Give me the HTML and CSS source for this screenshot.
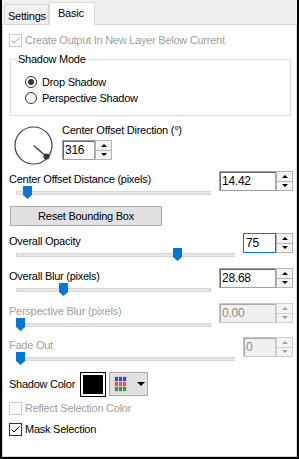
FILE: index.html
```html
<!DOCTYPE html>
<html>

<head>
    <meta charset="UTF-8">
    <title>Drop Shadow - Basic</title>
    <link rel="stylesheet" href="styles.css">
</head>

<body>
    <div class="window">
        <div class="tabs">
            <div class="tab">Settings</div>
            <div class="tab tab_active">Basic</div>
        </div>
        <div class="panel">
            <div class="check check_first check_disabled">
                <span class="check_box">
                    <svg width="11" height="11" viewBox="0 0 11 11"><path d="M1.5 5.5L4 8L9.5 2.5" fill="none" stroke="currentColor" stroke-width="1"/></svg>
                </span>
                Create Output In New Layer Below Current
            </div>

            <div class="group">
                <div class="group_title">Shadow Mode</div>
                <div class="radio radio_first"><span class="radio_dot radio_dot_on"></span>Drop Shadow</div>
                <div class="radio"><span class="radio_dot"></span>Perspective Shadow</div>
            </div>

            <div class="dial_row">
                <svg class="dial" width="40" height="40" viewBox="0 0 40 40">
                    <circle cx="19.5" cy="19.5" r="18.5" fill="none" stroke="#3c3c3c" stroke-width="1.2"/>
                    <line x1="19.5" y1="19.5" x2="32.5" y2="30.5" stroke="#3c3c3c" stroke-width="1.4"/>
                    <circle cx="32.5" cy="30.5" r="3" fill="#333"/>
                </svg>
                <div class="dial_info">
                    <div class="label">Center Offset Direction (°)</div>
                    <div class="spin spin_short spin_dial">
                        <div class="spin_field">316</div>
                        <div class="spin_btns"><span class="spin_btn spin_up"></span><span class="spin_btn spin_down"></span></div>
                    </div>
                </div>
            </div>

            <div class="sgroup sgroup_first">
                <div class="sgroup_main">
                    <div class="label">Center Offset Distance (pixels)</div>
                    <div class="slider"><div class="track"></div><div class="thumb" style="left: 7px"><svg width="9" height="13" viewBox="0 0 9 13"><path d="M0 0H9V9L4.5 13L0 9Z" fill="#0078d7"/></svg></div></div>
                </div>
                <div class="spin spin_wide">
                    <div class="spin_field">14.42</div>
                    <div class="spin_btns"><span class="spin_btn spin_up"></span><span class="spin_btn spin_down"></span></div>
                </div>
            </div>

            <div class="button">Reset Bounding Box</div>

            <div class="sgroup">
                <div class="sgroup_main">
                    <div class="label">Overall Opacity</div>
                    <div class="slider"><div class="track"></div><div class="thumb" style="left: 157px"><svg width="9" height="13" viewBox="0 0 9 13"><path d="M0 0H9V9L4.5 13L0 9Z" fill="#0078d7"/></svg></div></div>
                </div>
                <div class="spin spin_short spin_focus">
                    <div class="spin_field">75</div>
                    <div class="spin_btns"><span class="spin_btn spin_up"></span><span class="spin_btn spin_down"></span></div>
                </div>
            </div>

            <div class="sgroup">
                <div class="sgroup_main">
                    <div class="label">Overall Blur (pixels)</div>
                    <div class="slider"><div class="track"></div><div class="thumb" style="left: 43px"><svg width="9" height="13" viewBox="0 0 9 13"><path d="M0 0H9V9L4.5 13L0 9Z" fill="#0078d7"/></svg></div></div>
                </div>
                <div class="spin spin_wide">
                    <div class="spin_field">28.68</div>
                    <div class="spin_btns"><span class="spin_btn spin_up"></span><span class="spin_btn spin_down"></span></div>
                </div>
            </div>

            <div class="sgroup sgroup_disabled">
                <div class="sgroup_main">
                    <div class="label">Perspective Blur (pixels)</div>
                    <div class="slider"><div class="track"></div><div class="thumb" style="left: 0px"><svg width="9" height="13" viewBox="0 0 9 13"><path d="M0 0H9V9L4.5 13L0 9Z" fill="#0078d7"/></svg></div></div>
                </div>
                <div class="spin spin_wide spin_disabled">
                    <div class="spin_field">0.00</div>
                    <div class="spin_btns"><span class="spin_btn spin_up"></span><span class="spin_btn spin_down"></span></div>
                </div>
            </div>

            <div class="sgroup sgroup_disabled sgroup_last">
                <div class="sgroup_main">
                    <div class="label">Fade Out</div>
                    <div class="slider"><div class="track"></div><div class="thumb" style="left: 0px"><svg width="9" height="13" viewBox="0 0 9 13"><path d="M0 0H9V9L4.5 13L0 9Z" fill="#0078d7"/></svg></div></div>
                </div>
                <div class="spin spin_short spin_disabled">
                    <div class="spin_field">0</div>
                    <div class="spin_btns"><span class="spin_btn spin_up"></span><span class="spin_btn spin_down"></span></div>
                </div>
            </div>

            <div class="color_row">
                <div class="color_label">Shadow Color</div>
                <div class="swatch"></div>
                <div class="palette">
                    <svg width="13" height="16" viewBox="0 0 13 16">
                        <rect width="13" height="16" fill="#cfcfcf"/>
                        <rect x="1" y="1" width="3" height="4" fill="#3c3cff"/>
                        <rect x="5" y="1" width="3" height="4" fill="#3c3cff"/>
                        <rect x="9" y="1" width="3" height="4" fill="#3c3cff"/>
                        <rect x="1" y="6" width="3" height="4" fill="#ff4848"/>
                        <rect x="5" y="6" width="3" height="4" fill="#ff4848"/>
                        <rect x="9" y="6" width="3" height="4" fill="#ff4848"/>
                        <rect x="1" y="11" width="3" height="4" fill="#2e9e3e"/>
                        <rect x="5" y="11" width="3" height="4" fill="#2e9e3e"/>
                        <rect x="9" y="11" width="3" height="4" fill="#2e9e3e"/>
                    </svg>
                    <span class="palette_arrow"></span>
                </div>
            </div>

            <div class="check check_reflect check_disabled">
                <span class="check_box"></span>
                Reflect Selection Color
            </div>
            <div class="check check_mask">
                <span class="check_box">
                    <svg width="11" height="11" viewBox="0 0 11 11"><path d="M1.5 5.5L4 8L9.5 2.5" fill="none" stroke="currentColor" stroke-width="1"/></svg>
                </span>
                Mask Selection
            </div>
        </div>
    </div>
</body>

</html>
```

FILE: styles.css
```css
html,
body {
    margin: 0;
    padding: 0;
    font-family: "Liberation Sans", Arial, sans-serif;
    font-size: 11px;
    letter-spacing: -0.25px;
    color: #000000;
}

.window {
    width: 299px;
    height: 459px;
    box-sizing: border-box;
    border: 2px solid #000000;
    border-top: 0;
    background: #f0f0f0;
    display: flex;
    flex-direction: column;
}

/* tab strip */
.tabs {
    height: 24px;
    display: flex;
    align-items: flex-end;
    padding-left: 2px;
}

.tab {
    width: 45px;
    height: 20px;
    box-sizing: border-box;
    border: 1px solid #d9d9d9;
    border-bottom: 0;
    padding: 4px 0 0 3px;
    line-height: 14px;
}

.tab_active {
    width: 46px;
    height: 23px;
    margin-bottom: -1px;
    padding: 3px 0 0 8px;
    background: #ffffff;
    position: relative;
    z-index: 1;
}

.panel {
    flex: 1;
    background: #ffffff;
    border: 1px solid #d9d9d9;
    padding: 0 3px 0 6px;
}

/* checkboxes */
.check {
    display: flex;
    align-items: center;
    height: 13px;
    line-height: 13px;
}

.check_first {
    margin-top: 9px;
}

.check_reflect {
    margin-top: 5px;
}

.check_mask {
    margin-top: 8px;
}

.check_box {
    width: 13px;
    height: 13px;
    box-sizing: border-box;
    border: 1px solid #333333;
    margin-right: 3px;
    flex-shrink: 0;
    display: flex;
}

.check_disabled {
    color: #a0a0a0;
}

.check_disabled .check_box {
    border-color: #cccccc;
}

/* group box */
.group {
    margin: 12px 2px 0 1px;
    border: 1px solid #dcdcdc;
    padding-bottom: 9px;
}

.group_title {
    width: max-content;
    margin: -8px 0 0 6px;
    padding: 0 1px;
    background: #ffffff;
    line-height: 14px;
}

.radio {
    display: flex;
    align-items: center;
    height: 16px;
    margin-left: 14px;
}

.radio_first {
    margin-top: 8px;
}

.radio_dot {
    width: 12px;
    height: 12px;
    box-sizing: border-box;
    border: 1px solid #333333;
    border-radius: 50%;
    margin-right: 5px;
    display: flex;
    align-items: center;
    justify-content: center;
}

.radio_dot_on::after {
    content: "";
    width: 6px;
    height: 6px;
    border-radius: 50%;
    background: #333333;
}

/* direction dial */
.dial_row {
    display: flex;
    margin-top: 7px;
}

.dial {
    margin: 3px 0 0 5px;
}

.dial_info {
    margin-left: 8px;
}

.label {
    line-height: 14px;
    white-space: nowrap;
}

/* slider groups */
.sgroup {
    display: flex;
    align-items: flex-start;
    margin-top: 8px;
}

.sgroup_first {
    margin-top: 6px;
}

.sgroup_last {
    margin-top: 7px;
}

.sgroup_main {
    flex: 1;
}

.sgroup_disabled .label {
    color: #a0a0a0;
}

.slider {
    position: relative;
    height: 14px;
    box-sizing: border-box;
    padding-top: 6px;
    margin: -1px 8px 0 7px;
}

.track {
    height: 2px;
    border: 1px solid #d6d6d6;
    background: #e7e7e7;
}

.thumb {
    position: absolute;
    top: 1px;
    width: 9px;
    height: 13px;
    display: flex;
}

/* numeric up-down */
.spin {
    display: flex;
    height: 20px;
    margin-top: -1px;
    flex-shrink: 0;
    font-size: 12px;
}

.spin_dial {
    margin-top: 3px;
}

.spin_wide {
    width: 74px;
}

.spin_short {
    width: 50px;
}

.spin_field {
    flex: 1;
    box-sizing: border-box;
    border: 1px solid #a0a0a0;
    box-shadow: inset 1px 1px 0 #696969;
    padding-left: 2px;
    line-height: 18px;
    background: #ffffff;
}

.spin_focus .spin_field {
    border-color: #0078d7;
    box-shadow: none;
}

.spin_disabled .spin_field {
    background: #f0f0f0;
    color: #8a8a8a;
    border-color: #c8c8c8;
    box-shadow: inset 1px 1px 0 #a8a8a8;
}

.spin_btns {
    width: 17px;
    display: flex;
    flex-direction: column;
}

.spin_btn {
    flex: 1;
    box-sizing: border-box;
    border: 1px solid #b4b4b4;
    background: #f4f4f4;
    display: flex;
    align-items: center;
    justify-content: center;
}

.spin_down {
    border-top: 0;
}

.spin_up::after {
    content: "";
    border-left: 3px solid transparent;
    border-right: 3px solid transparent;
    border-bottom: 3px solid #000000;
}

.spin_down::after {
    content: "";
    border-left: 3px solid transparent;
    border-right: 3px solid transparent;
    border-top: 3px solid #000000;
}

.spin_disabled .spin_btn {
    border-color: #d0d0d0;
}

.spin_disabled .spin_up::after {
    border-bottom-color: #a0a0a0;
}

.spin_disabled .spin_down::after {
    border-top-color: #a0a0a0;
}

/* button */
.button {
    margin: 7px 0 0 1px;
    width: 152px;
    height: 20px;
    box-sizing: border-box;
    border: 1px solid #adadad;
    background: #e1e1e1;
    text-align: center;
    line-height: 18px;
}

/* shadow colour */
.color_row {
    display: flex;
    align-items: center;
    height: 26px;
    margin-top: 6px;
}

.color_label {
    width: 71px;
}

.swatch {
    width: 26px;
    height: 25px;
    box-sizing: border-box;
    border: 1px solid #000000;
    background: #000000;
    box-shadow: inset 0 0 0 2px #ffffff;
}

.palette {
    margin-left: 3px;
    width: 39px;
    height: 24px;
    box-sizing: border-box;
    border: 1px solid #adadad;
    background: #e1e1e1;
    display: flex;
    align-items: center;
    padding-left: 4px;
}

.palette_arrow {
    margin-left: 10px;
    border-left: 4px solid transparent;
    border-right: 4px solid transparent;
    border-top: 4px solid #000000;
}
```
